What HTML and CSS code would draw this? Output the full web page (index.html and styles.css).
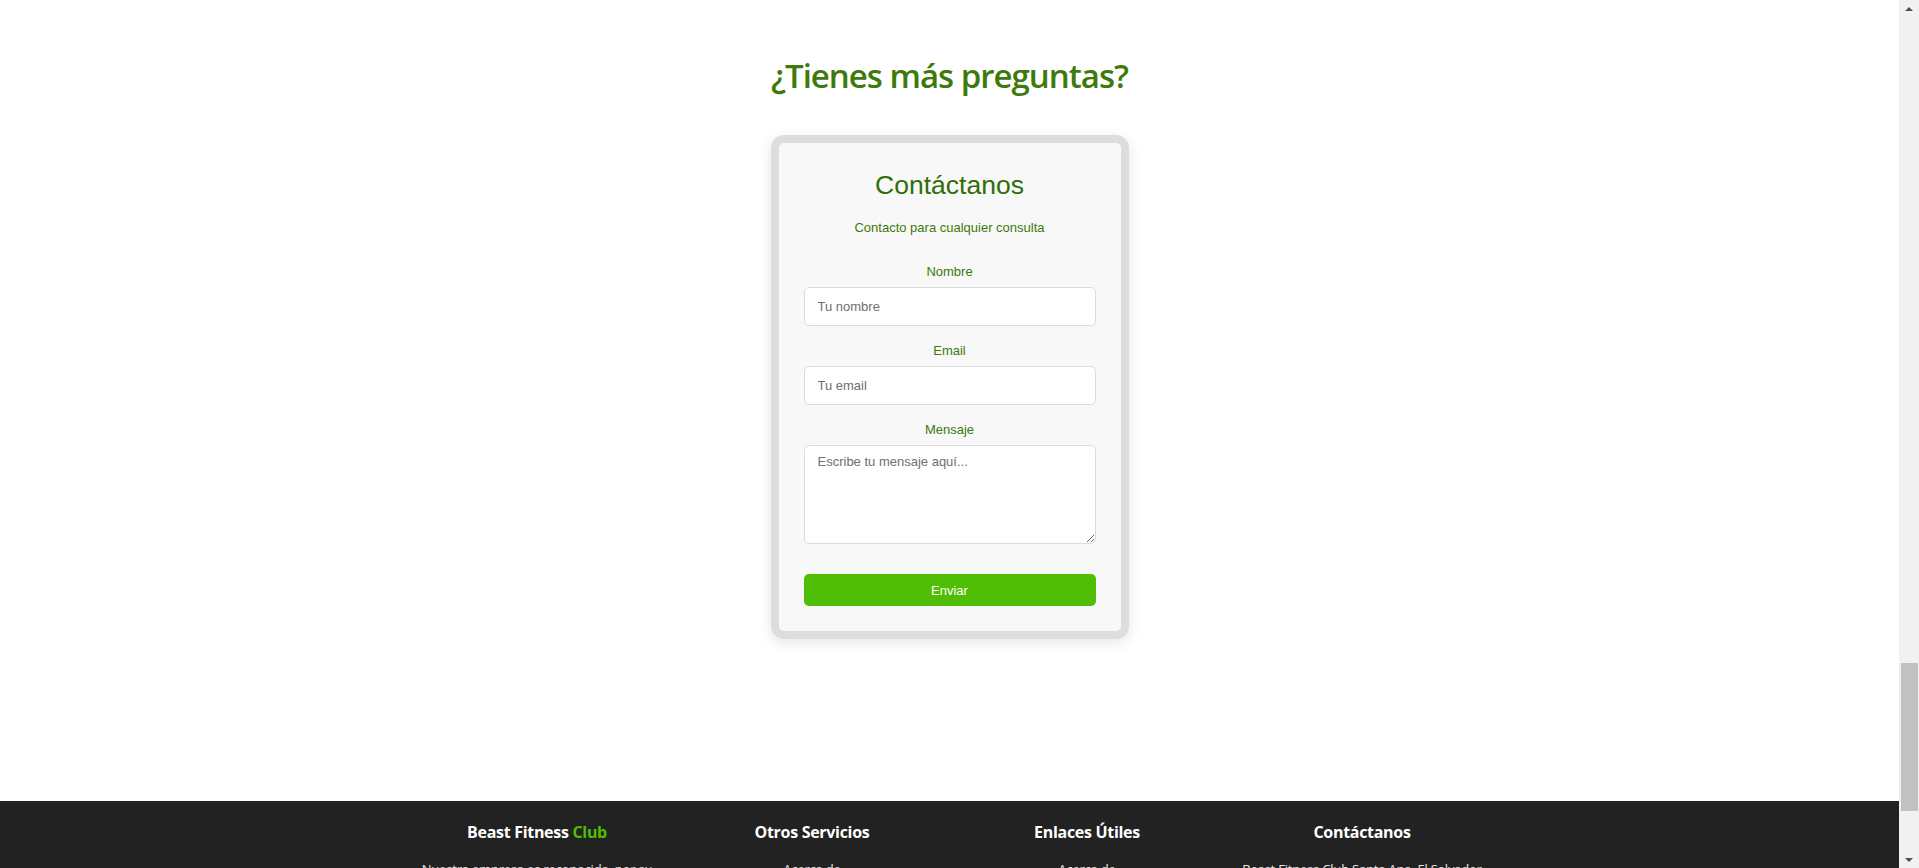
FILE: index.html
```html
<!DOCTYPE html>
<html lang="es">
<head>
<meta charset="utf-8">
<title>Beast Fitness Club - Contacto</title>
<link rel="stylesheet" href="styles.css">
</head>
<body>
<main class="faq-contact">
  <h1 class="section-title">¿Tienes más preguntas?</h1>
  <form class="contact-card">
    <h2 class="card-title">Contáctanos</h2>
    <p class="card-subtitle">Contacto para cualquier consulta</p>
    <div class="field">
      <label class="field-label" for="nombre">Nombre</label>
      <input class="field-input" id="nombre" type="text" placeholder="Tu nombre">
    </div>
    <div class="field">
      <label class="field-label" for="email">Email</label>
      <input class="field-input" id="email" type="email" placeholder="Tu email">
    </div>
    <div class="field">
      <label class="field-label" for="mensaje">Mensaje</label>
      <textarea class="field-input field-textarea" id="mensaje" placeholder="Escribe tu mensaje aquí..."></textarea>
    </div>
    <button class="submit-btn" type="button">Enviar</button>
  </form>
</main>
<footer class="site-footer">
  <div class="footer-cols">
    <div class="footer-col">
      <h3 class="footer-heading">Beast Fitness <span class="accent">Club</span></h3>
      <p class="footer-text">Nuestra empresa es reconocida, por su excelencia en el entrenamiento físico.</p>
    </div>
    <div class="footer-col">
      <h3 class="footer-heading">Otros Servicios</h3>
      <p class="footer-text">Acerca de</p>
    </div>
    <div class="footer-col">
      <h3 class="footer-heading">Enlaces Útiles</h3>
      <p class="footer-text">Acerca de</p>
    </div>
    <div class="footer-col">
      <h3 class="footer-heading">Contáctanos</h3>
      <p class="footer-text">Beast Fitness Club Santa Ana, El Salvador</p>
    </div>
  </div>
</footer>
<div class="scrollbar" aria-hidden="true">
  <span class="scroll-arrow scroll-up"></span>
  <span class="scroll-track"><span class="scroll-thumb"></span></span>
  <span class="scroll-arrow scroll-down"></span>
</div>
</body>
</html>
```

FILE: styles.css
```css
* { box-sizing: border-box; }

html, body {
  margin: 0;
  padding: 0;
  background: #ffffff;
}

body {
  font-family: "Liberation Sans", Arial, sans-serif;
}

.faq-contact {
  display: flex;
  flex-direction: column;
  align-items: center;
  padding: 55px 20px 162px 0;
}

.section-title {
  margin: 0 0 38px;
  font-family: "Open Sans", "Noto Sans", sans-serif;
  font-weight: 600;
  font-size: 33px;
  line-height: 42px;
  color: #3d7a0b;
  letter-spacing: -1px;
}

.contact-card {
  width: 358px;
  background: #f8f8f8;
  border: 8px solid #dddddd;
  border-radius: 13px;
  padding: 27px 25px 25px;
  box-shadow: 0 4px 14px rgba(0, 0, 0, 0.10);
  display: flex;
  flex-direction: column;
}

.card-title {
  margin: 0;
  text-align: center;
  font-weight: 400;
  font-size: 26.5px;
  line-height: 30px;
  color: #2f6e06;
}

.card-subtitle {
  margin: 20px 0 28px;
  text-align: center;
  font-size: 13px;
  line-height: 16px;
  color: #3d7a0b;
}

.field {
  display: flex;
  flex-direction: column;
  margin-bottom: 17px;
}

.field:last-of-type {
  margin-bottom: 0;
}

.field-label {
  display: block;
  text-align: center;
  font-size: 13px;
  line-height: 16px;
  color: #3d7a0b;
  margin-bottom: 7px;
}

.field-input {
  width: 100%;
  height: 39px;
  padding: 0 13px;
  border: 1px solid #dcdcdc;
  border-radius: 5px;
  background: #ffffff;
  font-family: "Liberation Sans", Arial, sans-serif;
  font-size: 13px;
  color: #333;
  outline: none;
}

.field-input::placeholder {
  color: #6f6f6f;
}

.field-textarea {
  height: 99px;
  padding: 8px 13px;
  resize: vertical;
  line-height: 16px;
}

.submit-btn {
  margin-top: 30px;
  height: 32px;
  width: 100%;
  border: none;
  border-radius: 5px;
  background: #50be05;
  color: #ffffff;
  font-family: "Liberation Sans", Arial, sans-serif;
  font-size: 13px;
  cursor: pointer;
}

.site-footer {
  background: #222222;
  padding: 17px 20px 40px 0;
  color: #ffffff;
}

.footer-cols {
  max-width: 1100px;
  margin: 0 auto;
  display: grid;
  grid-template-columns: repeat(4, 1fr);
}

.footer-col {
  text-align: center;
  padding: 0 15px;
}

.footer-heading {
  margin: 0;
  font-family: "Open Sans", "Noto Sans", sans-serif;
  font-weight: 700;
  font-size: 16px;
  line-height: 28px;
  letter-spacing: -0.3px;
  color: #ffffff;
}

.accent {
  color: #50be05;
}

.footer-text {
  margin: 13px 0 0;
  font-family: "Open Sans", "Noto Sans", sans-serif;
  font-size: 13px;
  line-height: 20px;
  letter-spacing: -0.2px;
  color: #e6e6e6;
}

/* Browser scrollbar shown in the reference, drawn over the page edge */
.scrollbar {
  position: fixed;
  top: 0;
  right: 0;
  width: 20px;
  height: 100vh;
  background: #f1f1f1;
  display: flex;
  flex-direction: column;
  z-index: 10;
}

.scroll-arrow {
  height: 17px;
  display: flex;
  align-items: center;
  justify-content: center;
}

.scroll-arrow::before {
  content: "";
  width: 0;
  height: 0;
  border-left: 4px solid transparent;
  border-right: 4px solid transparent;
}

.scroll-up::before {
  border-bottom: 4px solid #505050;
}

.scroll-down::before {
  border-top: 4px solid #505050;
}

.scroll-track {
  flex: 1;
  display: flex;
  flex-direction: column;
  justify-content: flex-end;
  padding: 0 1px 40px 2px;
}

.scroll-thumb {
  display: block;
  height: 148px;
  background: #c1c1c1;
}
```
